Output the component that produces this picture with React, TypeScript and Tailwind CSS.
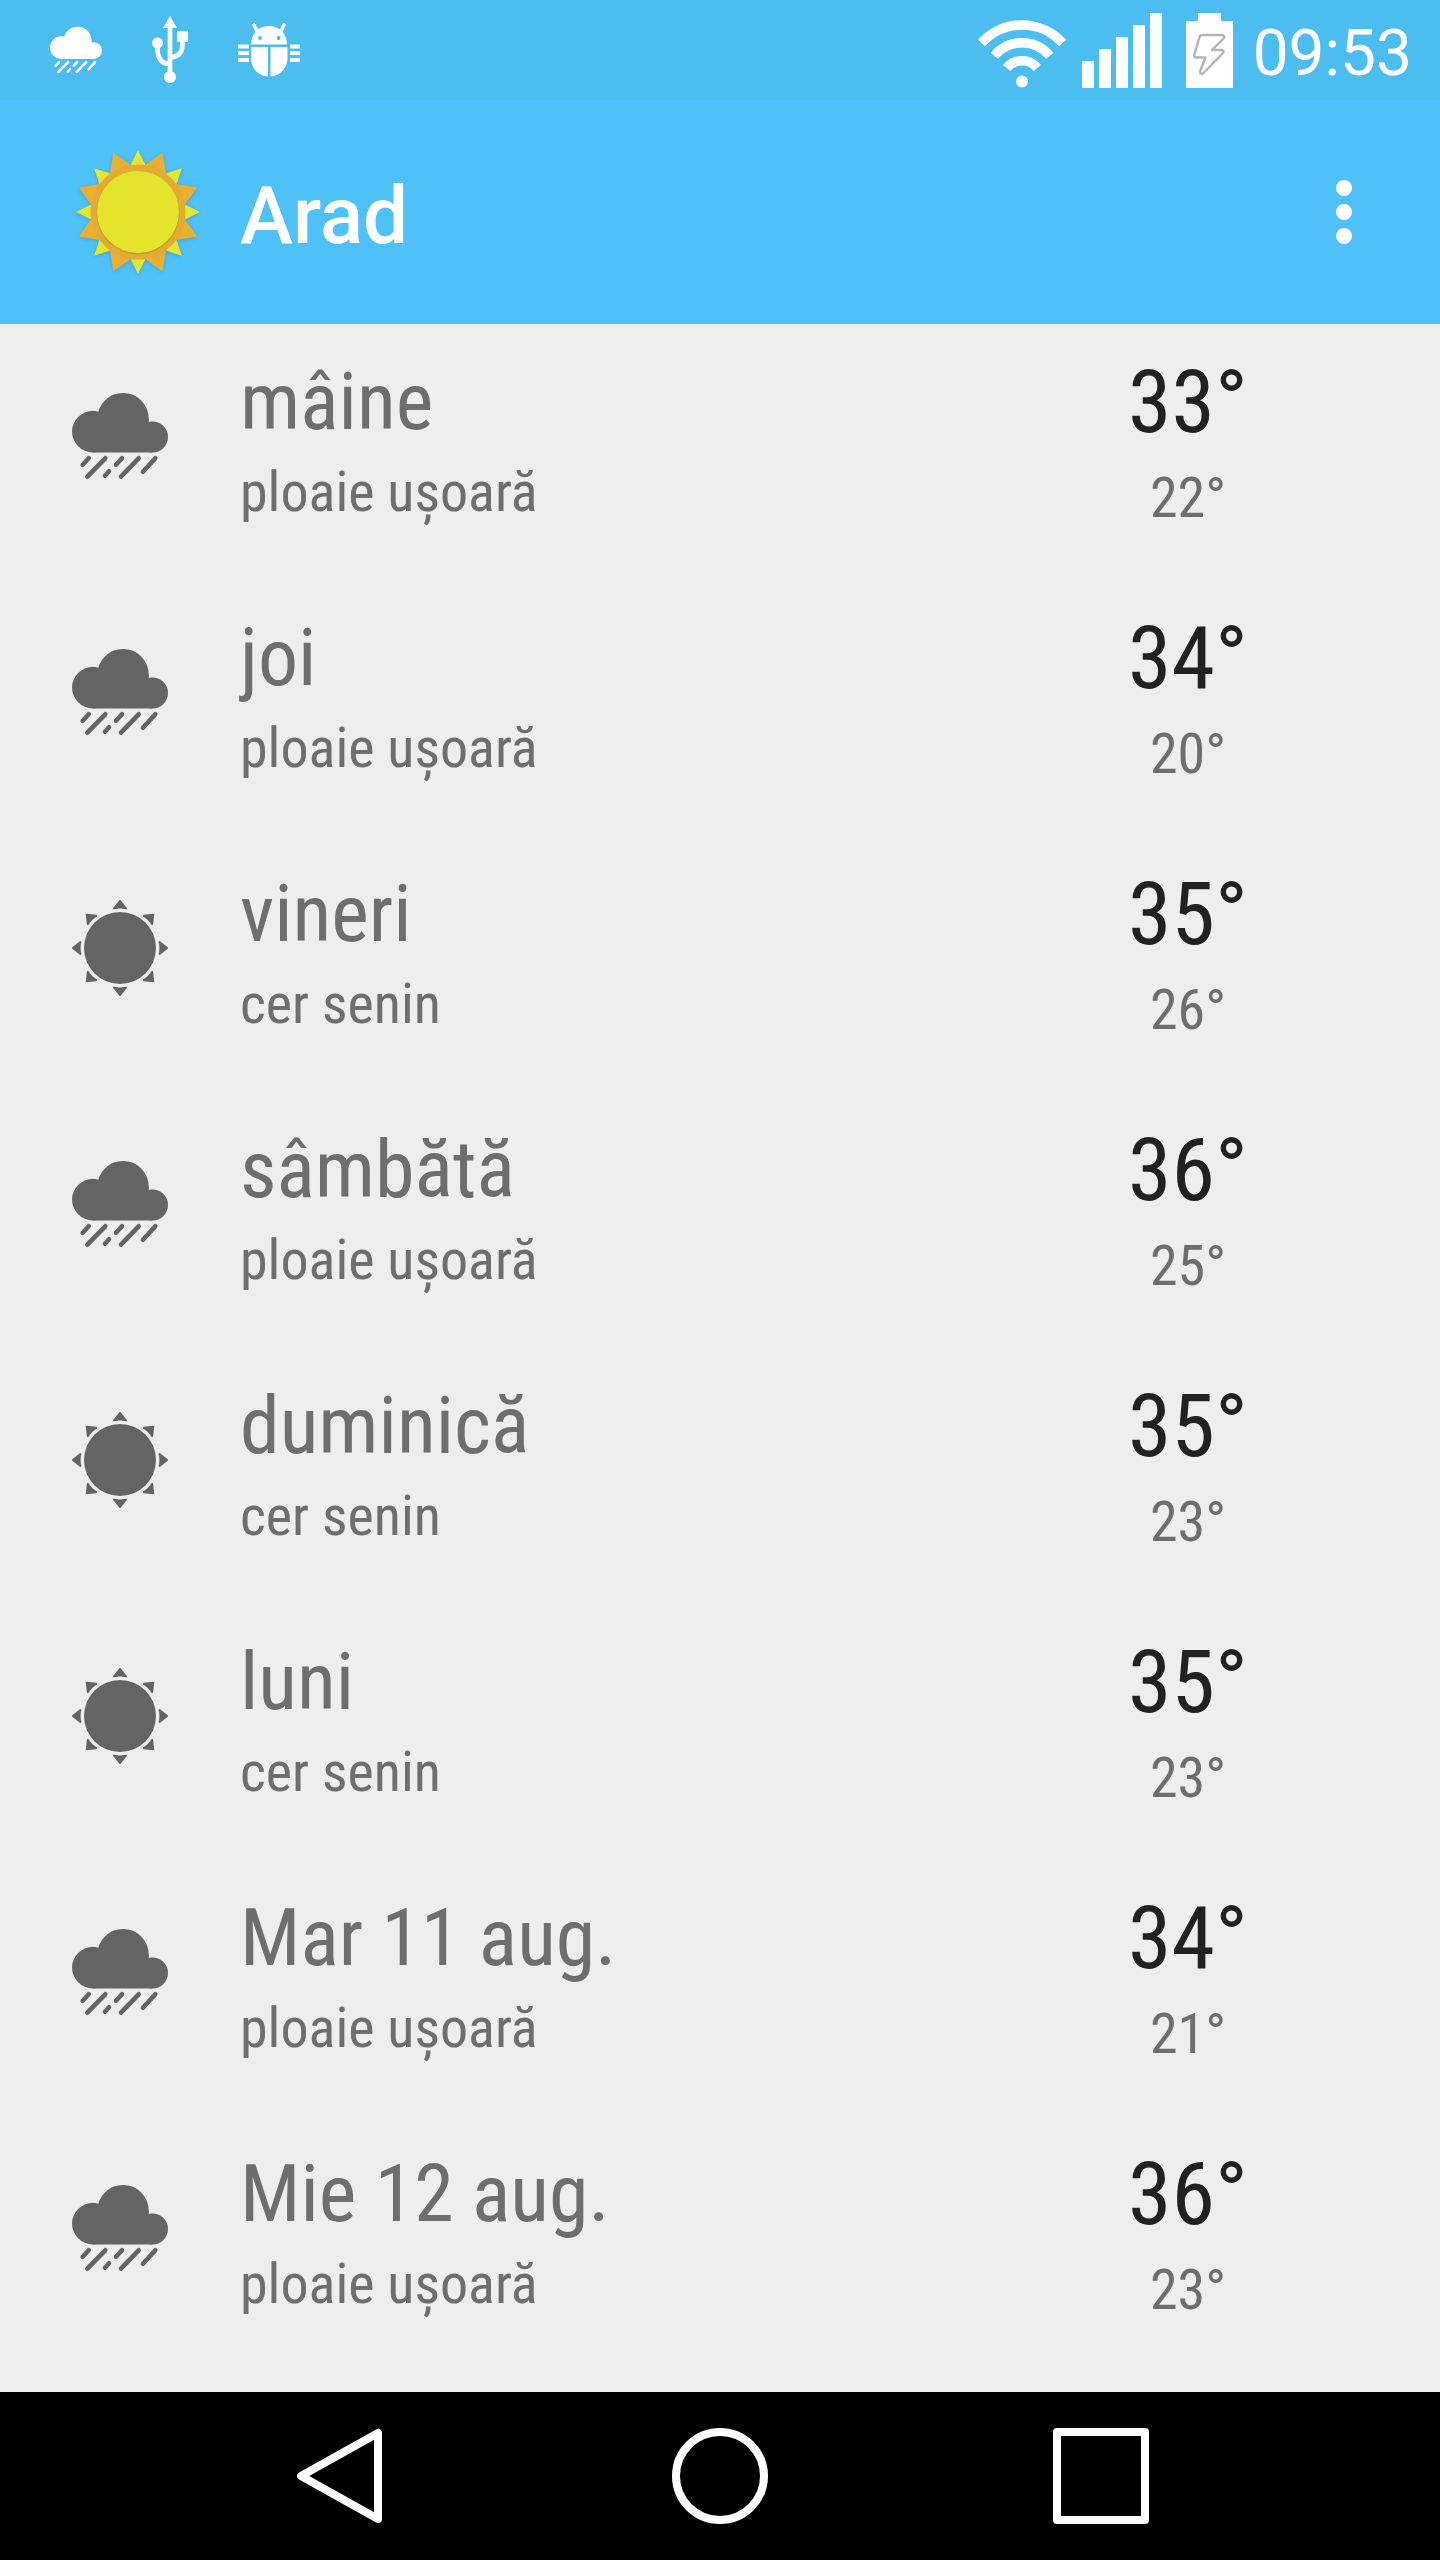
type Condition = "rain" | "clear";

interface Forecast {
  day: string;
  description: string;
  condition: Condition;
  high: number;
  low: number;
}

const forecasts: Forecast[] = [
  { day: "mâine", description: "ploaie ușoară", condition: "rain", high: 33, low: 22 },
  { day: "joi", description: "ploaie ușoară", condition: "rain", high: 34, low: 20 },
  { day: "vineri", description: "cer senin", condition: "clear", high: 35, low: 26 },
  { day: "sâmbătă", description: "ploaie ușoară", condition: "rain", high: 36, low: 25 },
  { day: "duminică", description: "cer senin", condition: "clear", high: 35, low: 23 },
  { day: "luni", description: "cer senin", condition: "clear", high: 35, low: 23 },
  { day: "Mar 11 aug.", description: "ploaie ușoară", condition: "rain", high: 34, low: 21 },
  { day: "Mie 12 aug.", description: "ploaie ușoară", condition: "rain", high: 36, low: 23 },
];

const eighths = [0, 45, 90, 135, 180, 225, 270, 315];

function RainIcon({ className }: { className: string }) {
  return (
    <svg viewBox="0 0 96 96" className={className} aria-hidden="true">
      <g fill="currentColor">
        <circle cx="20.8" cy="43.6" r="20.8" />
        <circle cx="51" cy="30.6" r="25.7" />
        <circle cx="80.6" cy="49" r="15.4" />
        <path d="M25.3 30.6H76.7V40L80.6 45V64.4H20.8V44Z" />
      </g>
      <path
        fill="none"
        stroke="currentColor"
        strokeWidth="4.6"
        strokeLinecap="round"
        d="M10.7 76.7L16.7 70.3M15.3 88.7L33.3 70.3M33 87.7L37 83.3M44 76.7L50 70.3M49 88.7L66.7 70.3M71 83.7L83.3 70.3"
      />
    </svg>
  );
}

function ClearIcon({ className }: { className: string }) {
  return (
    <svg viewBox="0 0 96 96" className={className} aria-hidden="true">
      <circle cx="48" cy="48" r="36" fill="currentColor" />
      {eighths.map((angle) => (
        <path
          key={angle}
          d="M48 0.8L54 8.4Q48 7 42 8.4Z"
          fill="currentColor"
          stroke="currentColor"
          strokeWidth="1.8"
          strokeLinejoin="round"
          transform={`rotate(${angle} 48 48)`}
        />
      ))}
    </svg>
  );
}

function AppSun() {
  return (
    <svg viewBox="0 0 128 128" className="size-32 drop-shadow-sm" aria-hidden="true">
      {eighths.map((angle) => (
        <path key={angle} d="M64 2L73 20L55 20Z" fill="#e3e82e" transform={`rotate(${angle} 64 64)`} />
      ))}
      {eighths.map((angle) => (
        <path
          key={angle}
          d="M64 0L76 19L64 24L52 19Z"
          fill="#e8af30"
          transform={`rotate(${angle + 22.5} 64 64)`}
        />
      ))}
      <circle cx="64" cy="64" r="47.5" fill="#e2ab33" />
      <circle cx="64" cy="65" r="41.5" fill="#c69c28" />
      <circle cx="64" cy="64" r="41" fill="#e4e42c" />
    </svg>
  );
}

function UsbIcon() {
  return (
    <svg viewBox="0 0 36 68" className="h-17 w-9" aria-hidden="true">
      <path fill="none" stroke="#fff" strokeWidth="4.6" d="M18 60V8M5.5 26V32Q5.5 48 18 48M30.5 24V28Q30.5 41 18 41.5" />
      <path fill="#fff" d="M18 0L25 12H11ZM25 15H36V26H25Z" />
      <circle cx="5.5" cy="27" r="5.5" fill="#fff" />
      <circle cx="18" cy="61" r="6" fill="#fff" />
    </svg>
  );
}

function DebugIcon() {
  return (
    <svg viewBox="0 0 62 54" className="h-[54px] w-[62px]" aria-hidden="true">
      <path
        fill="#fff"
        d="M13 21.500C13 11 20 3 31 3S49 11 49 21.500ZM13 24H30V53.500C20 53 13 45 13 35ZM32.500 24H49.500V35C49.500 45 42 53 32.500 53.500ZM0 21.500H11V25.500H0ZM0 28H11V32H0ZM0 35H11V39H0ZM52 21.500H62V25.500H52ZM52 28H62V32H52ZM52 35H62V39H52Z"
      />
      <path stroke="#fff" strokeWidth="3.6" strokeLinecap="round" d="M16 2L19.5 8.5M46 2L42.5 8.5" />
      <circle cx="22" cy="15" r="1.9" fill="#4bbeef" />
      <circle cx="40.5" cy="15" r="1.9" fill="#4bbeef" />
    </svg>
  );
}

function WifiIcon() {
  return (
    <svg viewBox="0 0 88 68" className="h-17 w-22" aria-hidden="true">
      <path
        fill="none"
        stroke="#fff"
        strokeWidth="9.6"
        d="M3.5 23A54.6 54.6 0 0 1 84.5 23M16.3 35.7A36 36 0 0 1 71.7 35.7M28.7 48A19.9 19.9 0 0 1 59.3 48"
      />
      <circle cx="44" cy="61.5" r="6" fill="#fff" />
    </svg>
  );
}

function SignalIcon() {
  return (
    <svg viewBox="0 0 80 75" className="h-[75px] w-20" aria-hidden="true">
      <path fill="#fff" d="M0 48H12V75H0ZM17 36H29V75H17ZM34 24H46V75H34ZM51 12H63V75H51ZM68 0H80V75H68Z" />
    </svg>
  );
}

function BatteryIcon() {
  return (
    <svg viewBox="0 0 47 75" className="h-[75px] w-[47px]" aria-hidden="true">
      <path fill="#fff" d="M12 0H35V8H47V75H0V8H12Z" />
      <path
        fill="none"
        stroke="#b4b4b4"
        strokeWidth="2.4"
        strokeLinejoin="round"
        d="M16 22H36Q39 22.5 38 25L26 37H36Q38.5 37.5 37 40L17.5 60Q14.5 62 14 58.5L19.5 44.5H10Q7.5 44.5 8.2 42L13.5 24Q14 22 16 22Z"
      />
    </svg>
  );
}

function StatusBar() {
  return (
    <div className="flex h-25 items-center justify-between bg-[#4bbeef] pr-7 pl-12.5">
      <div className="flex items-center gap-12.5">
        <RainIcon className="size-13 text-white" />
        <UsbIcon />
        <DebugIcon />
      </div>
      <div className="flex items-end gap-5 text-white">
        <div className="flex items-end gap-6">
          <div className="flex items-end gap-4">
            <WifiIcon />
            <SignalIcon />
          </div>
          <BatteryIcon />
        </div>
        <time className="text-[64px] leading-[68px]">09:53</time>
      </div>
    </div>
  );
}

function ForecastRow({ day, description, condition, high, low }: Forecast) {
  return (
    <li className="flex h-64 items-start pl-18">
      <div className="w-42 pt-16 text-[#646464]">
        {condition === "rain" ? <RainIcon className="size-24" /> : <ClearIcon className="size-24" />}
      </div>
      <div className="flex-1 pt-7.5 text-[#6e6e6e]">
        <h2 className="text-[80px] leading-24">{day}</h2>
        <p className="mt-0.5 text-[56px] leading-20">{description}</p>
      </div>
      <div className="mr-38 w-50 pt-7.5 text-center">
        <p className="text-[88px] leading-24 text-[#212121]">{high}°</p>
        <p className="mt-2 text-[56px] leading-20 text-[#6e6e6e]">{low}°</p>
      </div>
    </li>
  );
}

function NavigationBar() {
  return (
    <nav className="flex h-42 items-center justify-center gap-[285px] bg-black">
      <button type="button" aria-label="Înapoi">
        <svg viewBox="0 0 96 96" className="size-24" aria-hidden="true">
          <path d="M87 5V91L10 48Z" fill="none" stroke="#fff" strokeWidth="8" strokeLinejoin="round" />
        </svg>
      </button>
      <button type="button" aria-label="Acasă">
        <svg viewBox="0 0 96 96" className="size-24" aria-hidden="true">
          <circle cx="48" cy="48" r="44" fill="none" stroke="#fff" strokeWidth="8" />
        </svg>
      </button>
      <button type="button" aria-label="Aplicații recente">
        <svg viewBox="0 0 96 96" className="size-24" aria-hidden="true">
          <rect x="4" y="4" width="88" height="88" fill="none" stroke="#fff" strokeWidth="8" strokeLinejoin="round" />
        </svg>
      </button>
    </nav>
  );
}

export default function App() {
  return (
    <div className="flex min-h-screen flex-col bg-[#eeeeee] font-['Roboto',sans-serif]">
      <StatusBar />
      <header className="flex h-56 items-center bg-[#4fc1f9] pr-16 pl-18.5 text-white">
        <AppSun />
        <h1 className="ml-9.5 flex-1 pt-2 text-[80px] leading-24 font-medium">Arad</h1>
        <button type="button" aria-label="Mai multe opțiuni" className="flex w-16 flex-col items-center gap-2">
          <span className="size-4 rounded-full bg-white" />
          <span className="size-4 rounded-full bg-white" />
          <span className="size-4 rounded-full bg-white" />
        </button>
      </header>
      <main className="flex-1 font-['Roboto_Condensed','Roboto',sans-serif]">
        <ul>
          {forecasts.map((forecast) => (
            <ForecastRow key={forecast.day} {...forecast} />
          ))}
        </ul>
      </main>
      <NavigationBar />
    </div>
  );
}
